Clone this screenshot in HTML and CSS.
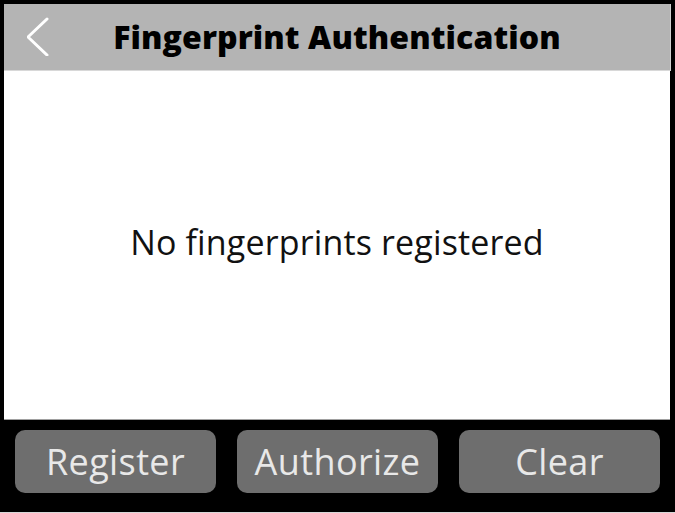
FILE: index.html
```html
<!DOCTYPE html>
<html>
<head>
<meta charset="utf-8">
<link rel="stylesheet" href="styles.css">
</head>
<body>
<div class="device">
  <div class="header">
    <svg class="back" width="30" height="48" viewBox="0 0 30 48">
      <polyline points="20,11 1,29 20,47" fill="none" stroke="#ffffff" stroke-width="3" stroke-linecap="round" stroke-linejoin="round"/>
    </svg>
    <div class="title">Fingerprint Authentication</div>
  </div>
  <div class="content">
    <div class="message">No fingerprints registered</div>
  </div>
  <div class="footer">
    <div class="btn">Register</div>
    <div class="btn">Authorize</div>
    <div class="btn">Clear</div>
  </div>
</div>
</body>
</html>
```
FILE: styles.css
```css
html, body {
  margin: 0;
  padding: 0;
  background: #000;
}
body {
  font-family: "Open Sans", "Noto Sans", sans-serif;
}
.device {
  width: 675px;
  height: 513px;
  box-sizing: border-box;
  padding: 4px 4px 0 4px;
  border-bottom: 1px solid #d8d8d8;
  display: flex;
  flex-direction: column;
  background: #000;
}
.header {
  position: relative;
  height: 66px;
  flex: none;
  background: #b4b4b4;
  border-bottom: 1px solid #d8d8d8;
  border-right: 1px solid #d0d0d0;
  display: flex;
  align-items: center;
  justify-content: center;
}
.back {
  position: absolute;
  left: 23px;
  top: 4px;
}
.title {
  font-weight: 800;
  font-size: 32px;
  color: #000;
  letter-spacing: 0.1px;
  padding-bottom: 2px;
}
.content {
  height: 349px;
  flex: none;
  margin-right: 1px;
  background: #fff;
  border-bottom: 1px solid #a0a0a0;
  display: flex;
  align-items: center;
  justify-content: center;
  padding-bottom: 6px;
  box-sizing: border-box;
}
.message {
  font-size: 34px;
  letter-spacing: 0.15px;
  color: #111;
}
.footer {
  flex: 1;
  display: flex;
  gap: 21px;
  padding: 10px 11px 19px 11px;
}
.btn {
  flex: 1;
  background: #6e6e6e;
  border-radius: 10px;
  color: #e8e8e8;
  font-size: 36px;
  letter-spacing: 0.4px;
  display: flex;
  align-items: center;
  justify-content: center;
}
```
